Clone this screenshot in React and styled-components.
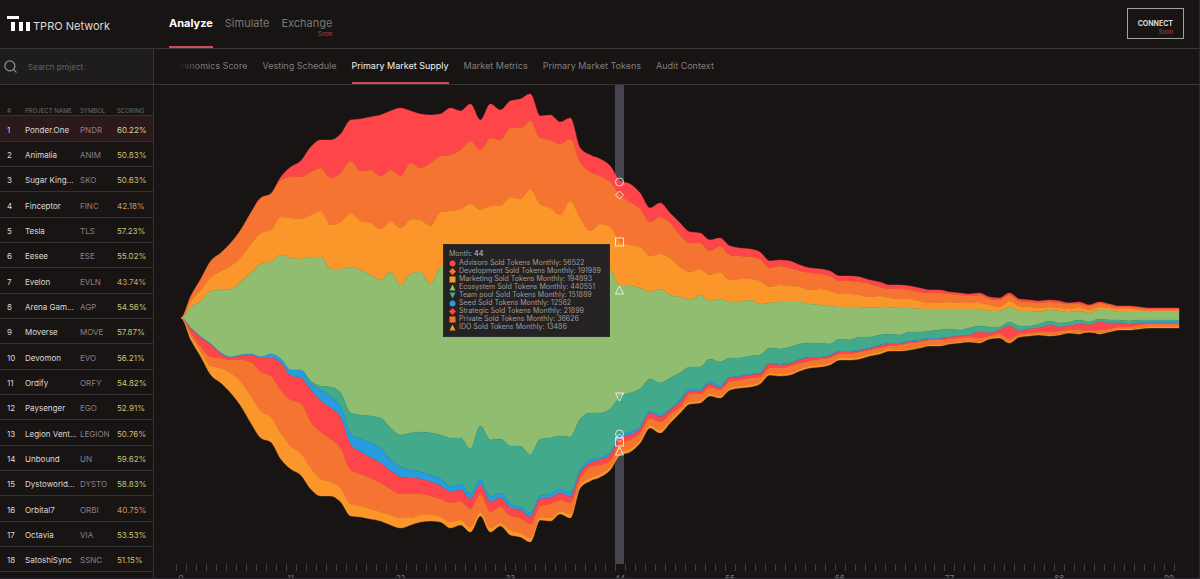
import React from 'react';
import styled, { createGlobalStyle } from 'styled-components';
import { Search } from 'lucide-react';

const GlobalStyle = createGlobalStyle`
  * {
    box-sizing: border-box;
  }

  body {
    margin: 0;
    background-color: #171413;
    color: #e4e1e0;
    font-family: Inter, "Liberation Sans", sans-serif;
    overflow: hidden;
  }
`;

const Page = styled.div`
  height: 100vh;
  display: flex;
  flex-direction: column;
  border-right: 1px solid #2c2929;
  border-bottom: 1px solid #29272b;
`;

const Header = styled.header`
  flex: none;
  display: flex;
  align-items: stretch;
  height: 49px;
  border-bottom: 1px solid #383536;
`;

const Brand = styled.a`
  display: flex;
  align-items: flex-start;
  width: 169px;
  padding: 16px 0 0 7px;
  gap: 3px;
  color: #dedbda;
  font-size: 11px;
  line-height: 21px;
  text-decoration: none;
`;

const MainNav = styled.nav`
  display: flex;
  flex: 1;
  gap: 12px;
`;

const MainLink = styled.a`
  display: flex;
  flex-direction: column;
  align-items: flex-end;
  padding-top: 17px;
  color: ${(props) => (props.$active ? '#ffffff' : '#7b7877')};
  font-size: 11px;
  font-weight: ${(props) => (props.$active ? 700 : 400)};
  line-height: 13px;
  text-decoration: none;
  border-bottom: 2px solid ${(props) => (props.$active ? '#cb4d52' : 'transparent')};
`;

const Soon = styled.small`
  color: #c23d42;
  font-size: 6px;
  font-weight: 400;
  line-height: 7px;
`;

const ConnectButton = styled.button`
  display: flex;
  flex-direction: column;
  align-items: flex-end;
  justify-content: flex-end;
  align-self: flex-start;
  height: 31px;
  margin: 8px 15px 0 0;
  padding: 0 10px 3px;
  color: #dedbda;
  background: none;
  border: 1px solid #a3a1a0;
  font-family: inherit;
  font-size: 7px;
  font-weight: 700;
  line-height: 8px;
  cursor: pointer;
`;

const Body = styled.div`
  display: flex;
  flex: 1;
  min-height: 0;
`;

const Sidebar = styled.aside`
  flex: none;
  width: 154px;
  overflow: hidden;
  border-right: 1px solid #353233;
`;

const SearchBox = styled.label`
  display: flex;
  align-items: center;
  gap: 10px;
  height: 36px;
  padding-left: 3px;
  color: #959291;
  background-color: #1e1c1d;
  border-bottom: 1px solid #383536;
`;

const SearchInput = styled.input`
  flex: 1;
  min-width: 0;
  padding: 0;
  color: #e4e1e0;
  background: none;
  border: none;
  outline: none;
  font-family: inherit;
  font-size: 8px;

  &::placeholder {
    color: #656262;
    opacity: 1;
  }
`;

const Table = styled.table`
  width: 100%;
  table-layout: fixed;
  border-collapse: collapse;
`;

const HeadCell = styled.th`
  width: ${(props) => props.$width};
  height: 30px;
  padding: 0;
  color: #716e6d;
  border-bottom: 1px solid #353233;
  font-size: 6px;
  font-weight: 400;
  line-height: 8px;
  text-align: left;
  vertical-align: bottom;

  &:first-child {
    padding-left: 7px;
  }
`;

const Row = styled.tr`
  height: 25px;
  background-color: ${(props) => (props.$selected ? '#2b1a1b' : 'transparent')};
  border-bottom: 1px solid #353233;

  &:nth-child(3n + 1) {
    height: 26px;
  }
`;

const Cell = styled.td`
  padding: 3px 0 0;
  overflow: hidden;
  color: ${(props) => props.$color || '#dedbda'};
  font-size: 8px;
  line-height: 10px;
  white-space: nowrap;

  &:first-child {
    padding-left: 7px;
  }
`;

const Content = styled.main`
  display: flex;
  flex: 1;
  flex-direction: column;
  min-width: 0;
`;

const Tabs = styled.nav`
  flex: none;
  display: flex;
  gap: 15px;
  height: 36px;
  padding-left: 15px;
  border-bottom: 1px solid #383536;
`;

const Tab = styled.a`
  display: flex;
  align-items: center;
  color: ${(props) => (props.$active ? '#f4f2f1' : '#817e7d')};
  border-bottom: 2px solid ${(props) => (props.$active ? '#cb4d52' : 'transparent')};
  font-size: 9px;
  text-decoration: none;
  white-space: nowrap;

  &:first-child {
    mask-image: linear-gradient(to right, transparent 10px, black 30px);
  }
`;

const ChartArea = styled.section`
  position: relative;
  flex: 1;
  min-height: 0;
  overflow: hidden;
`;

const Chart = styled.svg`
  display: block;
  width: 100%;
  height: auto;
`;

const AxisLabel = styled.text`
  fill: #7b7877;
  font-size: 8px;
  text-anchor: middle;
`;

const Tooltip = styled.div`
  position: absolute;
  top: 159px;
  left: 289px;
  width: 167px;
  padding: 5px;
  color: #a09d9c;
  background-color: #242222;
  border: 1px solid #302d2d;
  font-size: 7px;
  line-height: 8px;
`;

const TooltipTitle = styled.div`
  margin-bottom: 1px;
`;

const TooltipItem = styled.div`
  display: flex;
  align-items: center;
  gap: 3px;
  white-space: nowrap;
`;

const RED = '#fe4549';
const ORANGE = '#f67432';
const AMBER = '#fb962a';
const GREEN = '#90bd70';
const TEAL = '#42a98a';
const BLUE = '#279cde';

const projects = [
  ['Ponder.One', 'PNDR', '60.22%', '#dcd188'],
  ['Animalia', 'ANIM', '50.83%', '#d8bd6c'],
  ['Sugar King...', 'SKO', '50.63%', '#d8bd6c'],
  ['Finceptor', 'FINC', '42.18%', '#d99a55'],
  ['Tesla', 'TLS', '57.23%', '#c3c477'],
  ['Eesee', 'ESE', '55.02%', '#cdc372'],
  ['Evelon', 'EVLN', '43.74%', '#d99f58'],
  ['Arena Gam...', 'AGP', '54.56%', '#cfc272'],
  ['Moverse', 'MOVE', '57.87%', '#c1c577'],
  ['Devomon', 'EVO', '56.21%', '#c9c474'],
  ['Ordify', 'ORFY', '54.82%', '#cfc272'],
  ['Paysenger', 'EGO', '52.91%', '#d4c070'],
  ['Legion Vent...', 'LEGION', '50.76%', '#d8bd6c'],
  ['Unbound', 'UN', '59.62%', '#bac67b'],
  ['Dystoworld...', 'DYSTO', '58.83%', '#bdc67a'],
  ['Orbital7', 'ORBI', '40.75%', '#d98f50'],
  ['Octavia', 'VIA', '53.53%', '#d2c171'],
  ['SatoshiSync', 'SSNC', '51.15%', '#d7be6d'],
];

const tabs = [
  'Tokenomics Score',
  'Vesting Schedule',
  'Primary Market Supply',
  'Market Metrics',
  'Primary Market Tokens',
  'Audit Context',
];

const series = [
  { name: 'Advisors', value: 56522, color: RED, shape: 'circle', y: 182 },
  { name: 'Development', value: 191989, color: ORANGE, shape: 'diamond', y: 195 },
  { name: 'Marketing', value: 194893, color: AMBER, shape: 'square', y: 242 },
  { name: 'Ecosystem', value: 440551, color: GREEN, shape: 'up', y: 290 },
  { name: 'Team pool', value: 151889, color: TEAL, shape: 'down', y: 397 },
  { name: 'Seed', value: 12562, color: BLUE, shape: 'circle', y: 434 },
  { name: 'Strategic', value: 21899, color: RED, shape: 'diamond', y: 438 },
  { name: 'Private', value: 36626, color: ORANGE, shape: 'square', y: 442 },
  { name: 'IDO', value: 13486, color: AMBER, shape: 'up', y: 451 },
];

// one value per month, the upper edge of every stream from top to bottom
const advisors = [
  318, 296, 279, 261, 253, 243, 230, 213, 198, 194, 177, 167, 161, 147, 140, 140, 134, 120, 119, 117,
  115, 111, 108, 111, 114, 115, 114, 108, 111, 104, 120, 104, 110, 101, 99, 94, 116, 115, 122, 118,
  148, 155, 159, 166, 181, 184, 193, 208, 203, 213, 223, 232, 233, 240, 238, 246, 248, 249, 252, 261,
  260, 261, 265, 268, 269, 271, 276, 276, 277, 280, 282, 285, 285, 286, 288, 290, 290, 292, 293, 294,
  293, 297, 298, 293, 299, 300, 301, 300, 301, 303, 302, 305, 302, 304, 306, 306, 307, 308, 308, 308, 308,
];
const development = [
  318, 296, 279, 261, 253, 243, 230, 213, 198, 194, 180, 177, 177, 172, 168, 178, 173, 161, 171, 170,
  176, 170, 176, 163, 168, 163, 156, 155, 150, 141, 150, 138, 140, 128, 128, 121, 138, 140, 144, 139,
  162, 172, 176, 182, 195, 202, 209, 222, 217, 223, 235, 243, 243, 251, 246, 255, 256, 257, 259, 268,
  266, 268, 271, 273, 274, 276, 281, 281, 282, 284, 287, 289, 289, 290, 292, 293, 293, 294, 295, 296,
  295, 299, 300, 295, 301, 302, 303, 302, 303, 304, 304, 306, 303, 305, 307, 307, 308, 309, 309, 309, 309,
];
const marketing = [
  318, 301, 290, 277, 271, 266, 257, 244, 233, 230, 217, 218, 219, 215, 211, 225, 222, 213, 221, 223,
  229, 221, 228, 220, 220, 226, 212, 211, 209, 204, 210, 206, 206, 197, 199, 189, 204, 208, 215, 201,
  218, 231, 224, 227, 242, 245, 247, 256, 254, 258, 267, 272, 269, 275, 272, 280, 279, 279, 281, 287,
  285, 286, 287, 290, 289, 291, 294, 294, 295, 297, 296, 298, 299, 299, 301, 303, 303, 302, 303, 303,
  303, 305, 307, 301, 306, 307, 308, 307, 308, 309, 307, 310, 307, 308, 309, 309, 310, 311, 311, 311, 311,
];
const ecosystem = [
  318, 307, 301, 291, 290, 289, 282, 273, 264, 262, 255, 258, 259, 257, 257, 269, 269, 267, 270, 275,
  280, 272, 285, 274, 272, 284, 267, 266, 265, 262, 266, 263, 262, 258, 258, 253, 262, 266, 270, 260,
  266, 272, 268, 270, 286, 286, 288, 292, 289, 295, 297, 300, 295, 301, 299, 302, 302, 300, 304, 303,
  302, 302, 302, 304, 305, 306, 307, 307, 307, 308, 307, 307, 308, 308, 309, 309, 309, 309, 309, 309,
  309, 311, 311, 307, 311, 311, 312, 310, 311, 312, 311, 313, 310, 310, 312, 312, 312, 312, 312, 312, 312,
];
const teamPool = [
  318, 328, 337, 344, 353, 357, 355, 354, 357, 354, 359, 370, 370, 381, 386, 387, 393, 413, 415, 416,
  418, 428, 435, 433, 432, 433, 435, 438, 438, 449, 426, 440, 439, 446, 446, 455, 439, 438, 436, 437,
  419, 413, 413, 409, 397, 393, 389, 379, 383, 378, 373, 367, 367, 359, 362, 358, 358, 356, 355, 348,
  349, 347, 344, 343, 343, 344, 339, 340, 337, 337, 335, 334, 335, 332, 332, 331, 330, 329, 330, 328,
  326, 327, 327, 322, 326, 326, 324, 321, 323, 322, 320, 322, 319, 320, 320, 321, 320, 320, 320, 320, 320,
];
const seed = [
  318, 328, 337, 344, 353, 357, 355, 354, 357, 354, 359, 370, 370, 384, 390, 397, 407, 434, 439, 443,
  448, 460, 467, 470, 472, 475, 479, 487, 484, 494, 480, 497, 493, 504, 507, 513, 496, 494, 489, 493,
  470, 460, 458, 453, 435, 432, 427, 411, 415, 409, 400, 389, 389, 382, 386, 377, 376, 374, 373, 363,
  364, 363, 359, 357, 357, 355, 351, 351, 350, 348, 345, 343, 343, 341, 340, 338, 338, 337, 336, 335,
  332, 333, 330, 326, 331, 329, 328, 325, 327, 326, 324, 325, 322, 323, 323, 324, 323, 322, 322, 322, 322,
];
const strategic = [
  318, 329, 338, 345, 354, 358, 356, 355, 358, 358, 363, 376, 378, 390, 401, 408, 418, 445, 452, 458,
  463, 471, 477, 478, 479, 482, 486, 492, 490, 499, 485, 502, 498, 508, 510, 517, 499, 498, 493, 497,
  473, 463, 460, 455, 438, 435, 429, 413, 417, 410, 402, 391, 391, 384, 388, 378, 377, 375, 374, 364,
  365, 364, 360, 358, 358, 356, 352, 352, 351, 349, 346, 344, 344, 342, 341, 339, 339, 337, 336, 335,
  332, 333, 330, 326, 331, 329, 328, 325, 327, 326, 324, 325, 322, 323, 323, 324, 323, 323, 323, 323, 323,
];
const privateSale = [
  318, 333, 347, 357, 358, 360, 360, 362, 372, 376, 390, 400, 403, 422, 432, 439, 448, 470, 474, 478,
  483, 489, 494, 494, 494, 496, 499, 503, 501, 509, 494, 512, 507, 516, 518, 524, 506, 504, 500, 503,
  478, 467, 465, 461, 443, 440, 433, 418, 422, 414, 407, 394, 394, 387, 390, 381, 380, 378, 377, 368,
  368, 366, 363, 361, 359, 358, 354, 354, 352, 350, 348, 346, 345, 343, 342, 340, 340, 339, 338, 337,
  338, 336, 334, 339, 334, 333, 332, 332, 331, 330, 330, 331, 330, 329, 327, 327, 325, 324, 324, 324, 324,
];
const ido = [
  318, 336, 352, 366, 368, 373, 382, 396, 411, 417, 433, 446, 453, 468, 479, 482, 488, 504, 506, 509,
  512, 515, 518, 518, 515, 515, 517, 522, 520, 527, 512, 528, 523, 530, 533, 538, 517, 518, 511, 514,
  485, 478, 474, 467, 452, 449, 440, 425, 430, 420, 410, 402, 401, 394, 396, 388, 386, 385, 382, 373,
  374, 373, 369, 366, 365, 363, 358, 358, 357, 354, 352, 349, 350, 349, 347, 345, 345, 343, 342, 341,
  342, 338, 337, 342, 336, 335, 334, 335, 334, 332, 333, 332, 333, 331, 329, 329, 328, 327, 327, 327, 327,
];
const bottom = advisors.map((y) => 636 - y);

const edges = [advisors, development, marketing, ecosystem, teamPool, seed, strategic, privateSale, ido, bottom];

const monthX = (month) => 181 + month * 9.98;

// slopes of a monotone cubic, so peaks stay on their data points
function getSlopes(points) {
  return points.map(([x, y], i) => {
    if (i === 0 || i === points.length - 1) return 0;
    const [x0, y0] = points[i - 1];
    const [x1, y1] = points[i + 1];
    const before = (y - y0) / (x - x0);
    const after = (y1 - y) / (x1 - x);
    if (before * after <= 0) return 0;
    const middle = Math.abs((y1 - y0) / (x1 - x0));
    return Math.sign(before) * Math.min(2 * Math.abs(before), 2 * Math.abs(after), middle);
  });
}

function getCurve(points) {
  const slopes = getSlopes(points);
  return points.slice(1).map(([x, y], i) => {
    const [px, py] = points[i];
    const third = (x - px) / 3;
    return `C${px + third},${py + slopes[i] * third} ${x - third},${y - slopes[i + 1] * third} ${x},${y}`;
  }).join('');
}

function getStream(upper, lower) {
  const top = upper.map((y, i) => [monthX(i), y]);
  const base = lower.map((y, i) => [monthX(i), y]).reverse();
  return `M${top[0]}${getCurve(top)}L${base[0]}${getCurve(base)}Z`;
}

function Marker({ shape, x, y, size, ...rest }) {
  const r = size / 2;
  if (shape === 'circle') return <circle cx={x} cy={y} r={r} {...rest} />;
  if (shape === 'square') return <rect x={x - r} y={y - r} width={size} height={size} {...rest} />;
  const paths = {
    diamond: `M${x},${y - r}l${r},${r}l${-r},${r}l${-r},${-r}Z`,
    up: `M${x},${y - r}l${r},${size}h${-size}Z`,
    down: `M${x},${y + r}l${r},${-size}h${-size}Z`,
  };
  return <path d={paths[shape]} {...rest} />;
}

function Logo() {
  return (
    <svg width="23" height="15" viewBox="0 0 23 15" fill="#ffffff" aria-hidden="true">
      <rect x="0" y="0" width="12" height="3" />
      <rect x="4" y="6" width="4" height="9" />
      <rect x="12" y="6" width="4" height="9" />
      <rect x="19" y="6" width="4" height="9" />
    </svg>
  );
}

function SupplyChart() {
  const months = edges[0].map((_, i) => i);
  return (
    <Chart viewBox="154 85 1045 494" role="img" aria-label="Primary Market Supply">
      <rect x="615" y="85" width="9" height="479" fill="#454450" />
      {series.map((item, i) => (
        <path key={item.name} d={getStream(edges[i], edges[i + 1])} fill={item.color} stroke={item.color} strokeWidth="0.4" />
      ))}
      {series.map((item) => (
        <Marker
          key={item.name}
          shape={item.shape}
          x={619.5}
          y={item.y}
          size={8}
          fill="none"
          stroke="#ffffff"
          strokeOpacity="0.75"
        />
      ))}
      {months.map((month) => (
        <rect key={month} x={Math.round(monthX(month) - 5)} y="564" width="1" height="7" fill="#413e3e" />
      ))}
      {months.filter((month) => month % 11 === 0).map((month) => (
        <AxisLabel key={month} x={monthX(month)} y="581">{month}</AxisLabel>
      ))}
    </Chart>
  );
}

function ChartTooltip() {
  return (
    <Tooltip>
      <TooltipTitle>Month: <b>44</b></TooltipTitle>
      {series.map((item) => (
        <TooltipItem key={item.name}>
          <svg width="7" height="7" viewBox="0 0 7 7" aria-hidden="true">
            <Marker shape={item.shape} x={3.5} y={3.5} size={item.shape === 'diamond' ? 7 : 6} fill={item.color} />
          </svg>
          {item.name} Sold Tokens Monthly: {item.value}
        </TooltipItem>
      ))}
    </Tooltip>
  );
}

function ProjectTable() {
  return (
    <Table>
      <thead>
        <tr>
          <HeadCell $width="25px">#</HeadCell>
          <HeadCell $width="55px">PROJECT NAME</HeadCell>
          <HeadCell $width="37px">SYMBOL</HeadCell>
          <HeadCell>SCORING</HeadCell>
        </tr>
      </thead>
      <tbody>
        {projects.map(([name, symbol, score, color], i) => (
          <Row key={name} $selected={i === 0}>
            <Cell>{i + 1}</Cell>
            <Cell>{name}</Cell>
            <Cell $color="#917f86">{symbol}</Cell>
            <Cell $color={color}>{score}</Cell>
          </Row>
        ))}
      </tbody>
    </Table>
  );
}

export default function App() {
  return (
    <>
      <GlobalStyle />
      <Page>
        <Header>
          <Brand href="#">
            <Logo />
            TPRO Network
          </Brand>
          <MainNav>
            <MainLink href="#analyze" $active>Analyze</MainLink>
            <MainLink href="#simulate">Simulate</MainLink>
            <MainLink href="#exchange">
              Exchange
              <Soon>Soon</Soon>
            </MainLink>
          </MainNav>
          <ConnectButton type="button">
            CONNECT
            <Soon>Soon</Soon>
          </ConnectButton>
        </Header>
        <Body>
          <Sidebar>
            <SearchBox>
              <Search size={15} strokeWidth={2} />
              <SearchInput type="text" placeholder="Search project" aria-label="Search project" />
            </SearchBox>
            <ProjectTable />
          </Sidebar>
          <Content>
            <Tabs>
              {tabs.map((tab) => (
                <Tab key={tab} href="#" $active={tab === 'Primary Market Supply'}>{tab}</Tab>
              ))}
            </Tabs>
            <ChartArea>
              <SupplyChart />
              <ChartTooltip />
            </ChartArea>
          </Content>
        </Body>
      </Page>
    </>
  );
}
